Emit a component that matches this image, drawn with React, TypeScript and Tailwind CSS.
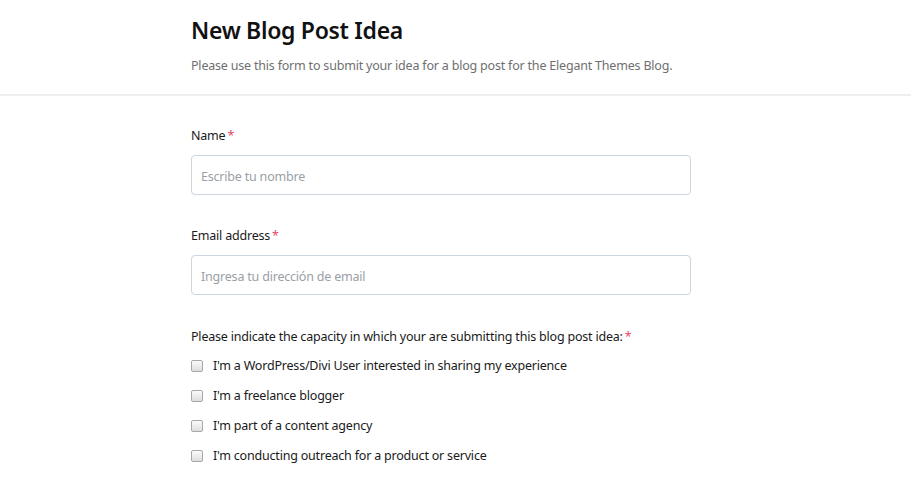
import React from "react";

const opts = [
  "I'm a WordPress/Divi User interested in sharing my experience",
  "I'm a freelance blogger",
  "I'm part of a content agency",
  "I'm conducting outreach for a product or service",
];

export default function App() {
  return (
    <div className="w-[911px] h-[481px] bg-white overflow-hidden" style={{ fontFamily: '"Noto Sans", "Open Sans", sans-serif' }}>
      <div className="border-b-2 border-[#eeeeee] h-[96px]">
        <div className="w-[520px] ml-[191px] pt-[14px]">
          <h1 className="text-[23px] leading-[32px] font-semibold tracking-[-0.3px] text-[#111]">New Blog Post Idea</h1>
          <p className="mt-[11px] text-[12.5px] leading-[18px] tracking-[-0.2px] text-[#6f6f6f]">
            Please use this form to submit your idea for a blog post for the Elegant Themes Blog.
          </p>
        </div>
      </div>
      <div className="w-[500px] ml-[191px] pt-[31px] text-[12.5px] tracking-[-0.2px]">
        <div className="leading-[18px] text-[#1a1a1a]">
          Name<span className="text-[#e5476b] ml-[2px]">*</span>
        </div>
        <div className="mt-[10px] h-[40px] border border-[#cdd5de] rounded-[4px] flex items-center pt-[4px] px-[9px] text-[#9aa0a6]">
          Escribe tu nombre
        </div>
        <div className="mt-[32px] leading-[18px] text-[#1a1a1a]">
          Email address<span className="text-[#e5476b] ml-[2px]">*</span>
        </div>
        <div className="mt-[10px] h-[40px] border border-[#cdd5de] rounded-[4px] flex items-center pt-[4px] px-[9px] text-[#9aa0a6]">
          Ingresa tu dirección de email
        </div>
        <div className="mt-[33px] leading-[18px] text-[#1a1a1a]">
          Please indicate the capacity in which your are submitting this blog post idea:<span className="text-[#e5476b] ml-[2px]">*</span>
        </div>
        <div className="mt-[5px] flex flex-col">
          {opts.map((o) => (
            <div key={o} className="h-[30px] flex items-center">
              <span className="w-[12px] h-[12px] rounded-[2px] border border-[#a8a8a8] bg-gradient-to-b from-[#fbfbfb] to-[#dedede] mr-[10px]" />
              <span className="text-[#1a1a1a]">{o}</span>
            </div>
          ))}
        </div>
      </div>
    </div>
  );
}
